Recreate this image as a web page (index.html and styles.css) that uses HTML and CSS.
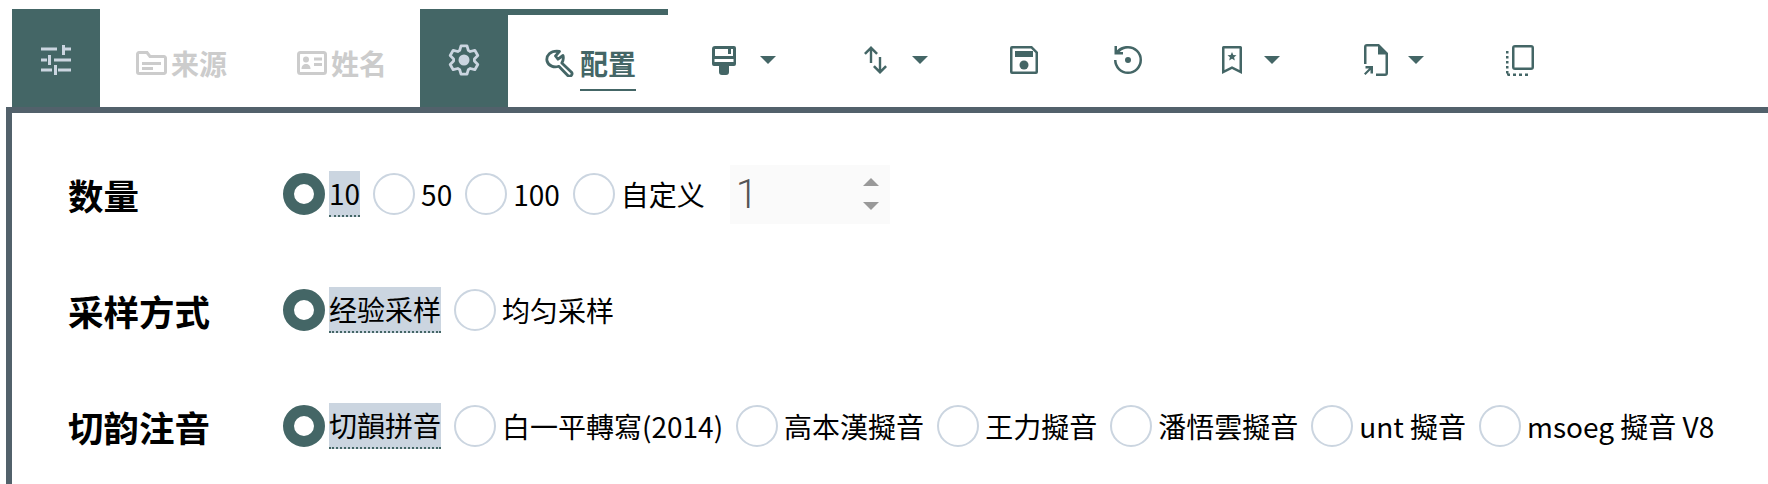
FILE: index.html
```html
<!DOCTYPE html>
<html lang="zh">
<head>
    <meta charset="UTF-8">
    <title>配置</title>
    <link rel="stylesheet" href="styles.css">
</head>
<body>
    <nav class="tabs">
        <div class="tab-icon">
            <svg width="30" height="30" viewBox="0 0 30 30"><path d="M0 2.500h16v3H0zM21 0h3v10h-3zM24 2.500h6v3h-6zM0 13.500h6v3H0zM7 10h3v10H7zM13 13.500h17v3H13zM0 23.500h11v3H0zM13 20h3v10h-3zM17 23.500h13v3H17z"/></svg>
        </div>
        <div class="tab tab-off">
            <svg class="line-icon" width="31" height="24" viewBox="0 0 31 24"><path d="M3 1.500h8l3 4h14a1.500 1.500 0 0 1 1.500 1.500v14a1.500 1.500 0 0 1-1.500 1.500H3A1.500 1.500 0 0 1 1.500 21V3A1.500 1.500 0 0 1 3 1.500zM6 12.500h19M6 17.500h11"/></svg>
            <span>来源</span>
        </div>
        <div class="tab tab-off">
            <svg class="line-icon" width="30" height="24" viewBox="0 0 30 24"><rect x="1.500" y="1.500" width="27" height="21" rx="2"/><path class="no-line" d="M4.500 18c0-3.500 2-5 4.500-5s4.500 1.500 4.500 5z"/><circle class="no-line" cx="9" cy="8.500" r="3"/><path d="M17 8h8M17 13.500h8"/></svg>
            <span>姓名</span>
        </div>
        <div class="tab-group">
            <div class="tab-icon">
                <svg class="gear" width="32" height="32" viewBox="-16 -16 32 32"><path d="M-3 -14.200L3 -14.200L4.300 -9.600L6.200 -8.500L10.800 -9.700L13.800 -4.500L10.400 -1.100L10.400 1.100L13.800 4.500L10.800 9.700L6.200 8.500L4.300 9.600L3 14.200L-3 14.200L-4.300 9.600L-6.200 8.500L-10.800 9.700L-13.800 4.500L-10.400 1.100L-10.400 -1.100L-13.800 -4.500L-10.800 -9.700L-6.200 -8.500L-4.300 -9.600Z"/><circle class="no-line" r="5.500"/></svg>
            </div>
            <div class="tab tab-on">
                <svg class="wrench" width="29" height="28" viewBox="0 0 29 28"><path d="M14.500 2.300L10.500 7L13 10.200L18 6.500C19 10 18 12 16.800 14L26.500 23.200A2.500 2.500 0 0 1 23 26.700L13.800 17.300C9 19 3.500 17 2 12C1 7 5 1 14.500 2.300Z"/></svg>
                <span class="tab-label">配置</span>
            </div>
        </div>
        <div class="tool tool-brush">
            <svg width="24" height="29" viewBox="0 0 24 29"><path fill-rule="evenodd" d="M3 0h19a2 2 0 0 1 2 2v16a2 2 0 0 1-2 2h-5v6a3 3 0 0 1-3 3h-4a3 3 0 0 1-3-3v-6H2a2 2 0 0 1-2-2V3a3 3 0 0 1 3-3zM3 3h13v5h3V3h2v7H3zM2.500 13h19v3h-19z"/></svg>
            <i class="caret"></i>
        </div>
        <div class="tool tool-sort">
            <svg width="23" height="28" viewBox="0 0 23 28"><path d="M7 0l7 7-1.800 1.800-4-4V17H5.800V4.800l-4 4L0 7zM14.800 11h2.400v12.200l4-4L23 21l-7 7-7-7 1.800-1.800 4 4z"/></svg>
            <i class="caret"></i>
        </div>
        <div class="tool tool-save">
            <svg width="28" height="28" viewBox="0 0 28 28"><path fill-rule="evenodd" d="M2 0h20l6 6v20a2 2 0 0 1-2 2H2a2 2 0 0 1-2-2V2a2 2 0 0 1 2-2zM2.500 2.500v23h23V7l-4.500-4.500zM5 5h18v6H5z"/><circle cx="14" cy="19" r="4.500"/></svg>
        </div>
        <div class="tool tool-history">
            <svg width="28" height="28" viewBox="0 0 28 28"><path d="M14 0a14 14 0 1 1-14 14h2.500A11.500 11.500 0 1 0 14 2.500c-3.300 0-6.200 1.400-8.300 3.600H9v2.500H0.500V0H3v4.300A14 14 0 0 1 14 0z"/><circle cx="14" cy="14" r="3"/></svg>
        </div>
        <div class="tool tool-bookmark">
            <svg width="20" height="28" viewBox="0 0 20 28"><path fill-rule="evenodd" d="M1.500 0h17A1.500 1.500 0 0 1 20 1.500V28l-10-5-10 5V1.500A1.500 1.500 0 0 1 1.500 0zM2.500 2.500v21.500l7.500-3.800 7.500 3.800V2.500z"/><path d="M10 6l1.300 2.900 3.200.3-2.400 2.100.7 3.100-2.800-1.600-2.800 1.600.7-3.100-2.400-2.100 3.200-.3z"/></svg>
            <i class="caret"></i>
        </div>
        <div class="tool tool-file">
            <svg width="24" height="32" viewBox="0 0 24 32"><path d="M3 0h12l9 9v20a3 3 0 0 1-3 3h-9v-2.500h9.500V10.500H14V2.500H2.500V20H0V3a3 3 0 0 1 3-3z"/><path d="M0 29.500l5-5H1.500V22H9v7.500H6.500V26l-5 5z"/></svg>
            <i class="caret"></i>
        </div>
        <div class="tool tool-copy">
            <svg width="28" height="31" viewBox="0 0 28 31"><path fill-rule="evenodd" d="M9 0h16a3 3 0 0 1 3 3v19a3 3 0 0 1-3 3H9a3 3 0 0 1-3-3V3a3 3 0 0 1 3-3zM8.500 2.500v20h17v-20z"/><path d="M0 6h2.500v2.500H0zM0 11h2.500v2.500H0zM0 16h2.500v2.500H0zM0 21h2.500v2.500H0zM0 26h2.500v2.500H0zM1 28.500h3V31H2a2 2 0 0 1-1-1zM7 28.500h3V31H7zM13 28.500h3V31h-3zM19 28.500h3V31h-3z"/></svg>
        </div>
    </nav>

    <main class="panel">
        <div class="row">
            <div class="row-title">数量</div>
            <div class="options">
                <label class="opt checked"><i class="radio"></i><span>10</span></label>
                <label class="opt"><i class="radio"></i><span>50</span></label>
                <label class="opt"><i class="radio"></i><span>100</span></label>
                <label class="opt"><i class="radio"></i><span>自定义</span></label>
                <div class="num-input">
                    <span class="num-value">1</span>
                    <div class="spin"><i class="spin-up"></i><i class="spin-down"></i></div>
                </div>
            </div>
        </div>
        <div class="row">
            <div class="row-title">采样方式</div>
            <div class="options">
                <label class="opt checked"><i class="radio"></i><span>经验采样</span></label>
                <label class="opt"><i class="radio"></i><span>均匀采样</span></label>
            </div>
        </div>
        <div class="row">
            <div class="row-title">切韵注音</div>
            <div class="options">
                <label class="opt checked"><i class="radio"></i><span>切韻拼音</span></label>
                <label class="opt"><i class="radio"></i><span>白一平轉寫(2014)</span></label>
                <label class="opt"><i class="radio"></i><span>高本漢擬音</span></label>
                <label class="opt"><i class="radio"></i><span>王力擬音</span></label>
                <label class="opt"><i class="radio"></i><span>潘悟雲擬音</span></label>
                <label class="opt"><i class="radio"></i><span>unt 擬音</span></label>
                <label class="opt"><i class="radio"></i><span>msoeg 擬音 V8</span></label>
            </div>
        </div>
    </main>
</body>
</html>
```

FILE: styles.css
```css
body {
    margin: 0;
    height: 484px;
    overflow: hidden;
    background-color: #fff;
    font-family: "Noto Sans CJK SC", "Noto Sans", sans-serif;
    color: #000;
}

svg {
    flex: none;
}

/* Top tabs */
.tabs {
    display: flex;
    height: 98px;
    padding-top: 9px;
    padding-left: 12px;
    fill: #446666;
}

.tab-icon {
    width: 88px;
    height: 98px;
    padding-top: 4px;
    box-sizing: border-box;
    flex: none;
    display: flex;
    align-items: center;
    justify-content: center;
    background-color: #446666;
    fill: #cbd5e0;
}

.gear {
    fill: #cbd5e0;
    stroke: #cbd5e0;
    fill-opacity: 0;
    stroke-width: 2.8;
    stroke-linejoin: round;
}

.gear .no-line {
    fill-opacity: 1;
    stroke: none;
}

.tab {
    display: flex;
    align-items: center;
    height: 98px;
    padding-top: 10px;
    box-sizing: border-box;
    flex: none;
    font-size: 28px;
    font-weight: 700;
}

.tab-off {
    width: 162px;
    padding-left: 36px;
    gap: 4px;
    color: #ccc;
}

.tab-off + .tab-off {
    width: 158px;
    padding-left: 35px;
}

.line-icon {
    fill: none;
    stroke: #ccc;
    stroke-width: 3;
}

.line-icon .no-line {
    fill: #ccc;
    stroke: none;
}

.tab-group {
    display: flex;
    width: 248px;
    height: 98px;
    box-shadow: inset 0 6px 0 #446666;
}

.tab-on {
    padding-left: 37px;
    gap: 6px;
    color: #446666;
}

.wrench {
    fill: none;
    stroke: #446666;
    stroke-width: 2.8;
    stroke-linejoin: round;
}

.tab-label {
    align-self: flex-start;
    margin-top: 24px;
    line-height: 40px;
    padding-bottom: 6px;
    border-bottom: 2px solid #446666;
}

.tool {
    display: flex;
    align-items: center;
    height: 98px;
    flex: none;
}

.tool-brush { margin-left: 44px; }
.tool-sort { margin-left: 88px; }
.tool-save { margin-left: 82px; }
.tool-history { margin-left: 76px; }
.tool-bookmark { margin-left: 80px; }
.tool-file { margin-left: 84px; }
.tool-copy { margin-left: 82px; }

.tool svg {
    margin-top: 4px;
}

.caret {
    width: 0;
    height: 0;
    margin-left: 24px;
    margin-top: 3px;
    border-left: 8px solid transparent;
    border-right: 8px solid transparent;
    border-top: 8px solid #446666;
}

.tool-sort .caret { margin-left: 25px; }
.tool-bookmark .caret { margin-left: 22px; }
.tool-file .caret { margin-left: 20px; }

/* Settings panel */
.panel {
    margin-left: 6px;
    height: 377px;
    box-sizing: border-box;
    overflow: hidden;
    border-top: 6px solid #52616b;
    border-left: 6px solid #52616b;
    padding-left: 56px;
    padding-top: 51px;
}

.row {
    display: flex;
    align-items: center;
    height: 60px;
    margin-bottom: 56px;
}

.row:last-child {
    margin-bottom: 0;
}

.row-title {
    width: 215px;
    flex: none;
    font-size: 35.5px;
    font-weight: 700;
}

.options {
    display: flex;
    align-items: center;
}

.opt {
    display: flex;
    align-items: center;
    margin-right: 13px;
    font-size: 28px;
    line-height: 44px;
}

.radio {
    width: 38px;
    height: 38px;
    border: 2px solid #cbd5e0;
    border-radius: 50%;
    background-color: #fff;
    margin-right: 6px;
}

.opt.checked .radio {
    width: 20px;
    height: 20px;
    border: 11px solid #446666;
    margin-right: 4px;
}

.opt.checked span {
    background-color: #cbd5e0;
    border-bottom: 2px dotted #446666;
}

.num-input {
    width: 160px;
    height: 59px;
    margin-left: 12px;
    display: flex;
    align-items: center;
    justify-content: space-between;
    background-color: #fafafa;
}

.num-value {
    margin-left: 6px;
    font-family: Roboto, sans-serif;
    font-size: 40px;
    font-weight: 300;
    color: #555;
}

.spin {
    width: 30px;
    height: 44px;
    margin-right: 4px;
    display: flex;
    flex-direction: column;
    align-items: center;
    justify-content: space-between;
    padding: 6px 0;
    box-sizing: border-box;
}

.spin-up, .spin-down {
    width: 0;
    height: 0;
    border-left: 8px solid transparent;
    border-right: 8px solid transparent;
}

.spin-up { border-bottom: 8px solid #999; }
.spin-down { border-top: 8px solid #999; }
```
